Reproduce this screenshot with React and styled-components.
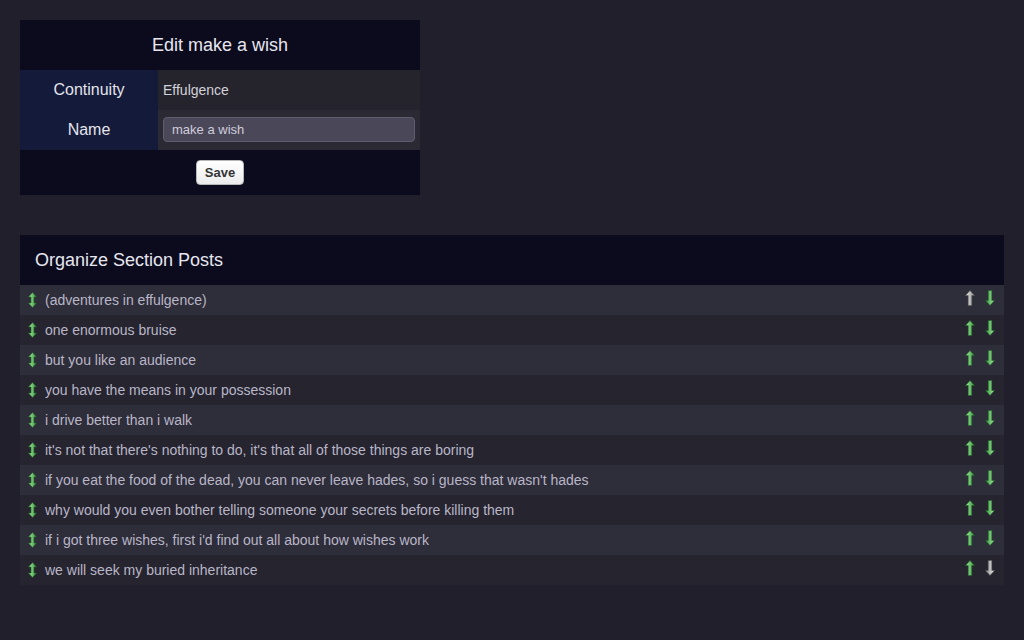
import React from 'react'
import styled, { createGlobalStyle } from 'styled-components'

const GlobalStyle = createGlobalStyle`
	body {
		margin: 0;
		background: #221f2d;
		font-family: 'Liberation Sans', Arial, sans-serif;
	}
`

const Page = styled.div`
	padding: 20px;
	display: flex;
	flex-direction: column;
	gap: 40px;
`

const Panel = styled.div`
	width: ${({ $width }) => $width || '100%'};
	background: #0c0b1e;
`

const Heading = styled.div`
	height: 50px;
	display: flex;
	align-items: center;
	justify-content: ${({ $center }) => ($center ? 'center' : 'flex-start')};
	padding: 0 15px;
	color: #e6e6ee;
	font-size: 18px;
`

const FormRow = styled.div`
	display: flex;
	height: 40px;
`

const Label = styled.div`
	width: 138px;
	background: #141a3a;
	color: #e4e4ec;
	font-size: 16px;
	display: flex;
	align-items: center;
	justify-content: center;
`

const Value = styled.div`
	flex: 1;
	background: ${({ $alt }) => ($alt ? '#2b2a34' : '#25242c')};
	color: #d2d1da;
	font-size: 14px;
	display: flex;
	align-items: center;
	padding: 0 5px;
`

const Input = styled.input`
	width: 100%;
	height: 25px;
	margin-top: -1px;
	box-sizing: border-box;
	background: #4a4759;
	border: 1px solid #5f5c70;
	border-radius: 4px;
	color: #cfcdd9;
	font-family: inherit;
	font-size: 13px;
	padding: 0 8px;
	outline: none;
`

const Footer = styled.div`
	height: 45px;
	display: flex;
	align-items: center;
	justify-content: center;
`

const Button = styled.button`
	height: 25px;
	padding: 0 8px;
	background: linear-gradient(#ffffff, #ececec);
	border: 1px solid #b8b8b8;
	border-radius: 4px;
	color: #333;
	font-family: inherit;
	font-weight: bold;
	font-size: 13px;
`

const Row = styled.div`
	height: 30px;
	display: flex;
	align-items: center;
	padding: 0 9px 0 8px;
	background: ${({ $alt }) => ($alt ? '#25242f' : '#2e2d3a')};
	color: #b9b6c7;
	font-size: 14px;
`

const Title = styled.span`
	flex: 1;
	margin-left: 8px;
`

const Arrows = styled.div`
	display: flex;
	gap: 10px;
	margin-bottom: 4px;
`

const Arrow = ({ dir = 'up', active = true, both = false }) => {
	const id = `${both ? 'b' : dir}-${active ? 'on' : 'off'}`
	const top = active ? '#a8ec9f' : '#eeeeee'
	const bottom = active ? '#36923f' : '#8a8a8a'
	const stroke = active ? '#1f5a26' : '#555'
	const d = both
		? 'M4.5 0.5 L8.5 5 L6 5 L6 11 L8.5 11 L4.5 15.5 L0.5 11 L3 11 L3 5 L0.5 5 Z'
		: 'M5 0.5 L9.5 5.5 L6.8 5.5 L6.8 15.5 L3.2 15.5 L3.2 5.5 L0.5 5.5 Z'
	const w = both ? 9 : 10
	return (
		<svg width={w} height='16' viewBox={`0 0 ${w} 16`}>
			<defs>
				<linearGradient id={id} x1='0' y1='0' x2='1' y2='0'>
					<stop offset='0' stopColor={top} />
					<stop offset='1' stopColor={bottom} />
				</linearGradient>
			</defs>
			<path
				d={d}
				fill={`url(#${id})`}
				stroke={stroke}
				strokeWidth='0.6'
				transform={dir === 'down' ? `rotate(180 ${w / 2} 8)` : undefined}
			/>
		</svg>
	)
}

const posts = [
	'(adventures in effulgence)',
	'one enormous bruise',
	'but you like an audience',
	'you have the means in your possession',
	'i drive better than i walk',
	"it's not that there's nothing to do, it's that all of those things are boring",
	"if you eat the food of the dead, you can never leave hades, so i guess that wasn't hades",
	'why would you even bother telling someone your secrets before killing them',
	"if i got three wishes, first i'd find out all about how wishes work",
	'we will seek my buried inheritance',
]

const App = () => (
	<>
		<GlobalStyle />
		<Page>
			<Panel $width='400px'>
				<Heading $center>Edit make a wish</Heading>
				<FormRow>
					<Label>Continuity</Label>
					<Value>Effulgence</Value>
				</FormRow>
				<FormRow>
					<Label>Name</Label>
					<Value $alt>
						<Input defaultValue='make a wish' />
					</Value>
				</FormRow>
				<Footer>
					<Button>Save</Button>
				</Footer>
			</Panel>

			<Panel>
				<Heading>Organize Section Posts</Heading>
				{posts.map((title, i) => (
					<Row key={title} $alt={i % 2 === 1}>
						<Arrow both />
						<Title>{title}</Title>
						<Arrows>
							<Arrow dir='up' active={i !== 0} />
							<Arrow dir='down' active={i !== posts.length - 1} />
						</Arrows>
					</Row>
				))}
			</Panel>
		</Page>
	</>
)

export default App
